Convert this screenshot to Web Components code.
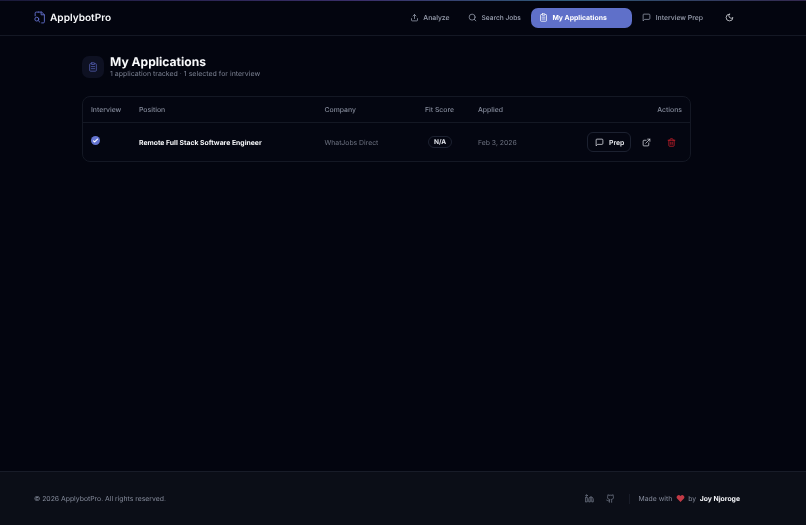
<!DOCTYPE html>
<html>
<head>
<meta charset="utf-8">
<title>ApplybotPro</title>
<style>
  html, body { margin: 0; height: 100%; }
  body {
    background: #03050f;
    color: #fff;
    font-family: Inter, "Liberation Sans", sans-serif;
    text-rendering: geometricPrecision;
    display: flex;
    flex-direction: column;
    height: 525px;
    overflow: hidden;
  }
  /* the reference is soft all over, and a filter also drops the colour fringes on small text */
  app-header, app-main, app-footer { filter: blur(.3px); }
  app-main { flex: 1; }
</style>
</head>
<body>
<app-header></app-header>
<app-main></app-main>
<app-footer></app-footer>

<script>
const icons = {
  upload: '<path d="M12 15V4M8 8l4-4 4 4M4 15v4a2 2 0 0 0 2 2h12a2 2 0 0 0 2-2v-4"/>',
  search: '<circle cx="11" cy="11" r="8"/><path d="m21 21-4.3-4.3"/>',
  clip: '<rect x="8" y="2" width="8" height="4" rx="1"/><path d="M16 4h2a2 2 0 0 1 2 2v14a2 2 0 0 1-2 2H6a2 2 0 0 1-2-2V6a2 2 0 0 1 2-2h2M8 11h8M8 16h8"/>',
  chat: '<path d="M21 15a2 2 0 0 1-2 2H7l-4 4V5a2 2 0 0 1 2-2h14a2 2 0 0 1 2 2z"/>',
  moon: '<path d="M12 3a6 6 0 0 0 9 9 9 9 0 1 1-9-9z"/>',
  link: '<path d="M18 13v6a2 2 0 0 1-2 2H5a2 2 0 0 1-2-2V8a2 2 0 0 1 2-2h6M15 3h6v6M10 14 21 3"/>',
  trash: '<path d="M3 6h18M19 6v14a2 2 0 0 1-2 2H7a2 2 0 0 1-2-2V6M8 6V4a2 2 0 0 1 2-2h4a2 2 0 0 1 2 2v2M10 11v6M14 11v6"/>',
  logo: '<path d="M10 2h6l5 5v13a2 2 0 0 1-2 2h-3M15 2v5h6M4 9V4a2 2 0 0 1 2-2h4"/><circle cx="7" cy="15" r="3.6"/><path d="m10 18 2.6 2.6"/>',
  linkedin: '<path d="M16 8a6 6 0 0 1 6 6v7h-4v-7a2 2 0 0 0-4 0v7h-4v-7a6 6 0 0 1 6-6z"/><rect x="2" y="9" width="4" height="12"/><circle cx="4" cy="4" r="2"/>',
  github: '<path d="M15 22v-4a4.8 4.8 0 0 0-1-3.5c3 0 6-2 6-5.5.08-1.25-.27-2.48-1-3.5.28-1.15.28-2.35 0-3.5 0 0-1 0-3 1.5-2.64-.5-5.36-.5-8 0C6 2 5 2 5 2c-.3 1.15-.3 2.35 0 3.5A5.4 5.4 0 0 0 4 9c0 3.5 3 5.5 6 5.5-.39.49-.68 1.05-.85 1.65-.17.6-.22 1.23-.15 1.85v4"/><path d="M9 18c-4.51 2-5-2-7-2"/>'
};

function svg(name, size, color, width) {
  return `<svg xmlns="http://www.w3.org/2000/svg" width="${size}" height="${size}" viewBox="0 0 24 24" fill="none" stroke="${color}" stroke-width="${width || 2}" stroke-linecap="round" stroke-linejoin="round">${icons[name]}</svg>`;
}

class AppHeader extends HTMLElement {
  constructor() {
    super();
    this.attachShadow({mode: 'open'});
    this.shadowRoot.innerHTML = `<style>
      :host {
        display: block;
        height: 35px;
        border-bottom: 1px solid #141824;
        position: relative;
        background: #03050f;
      }
      :host::before {
        content: "";
        position: absolute;
        top: 0; left: 0; right: 0;
        height: 1px;
        background: linear-gradient(90deg, #1a1a3a, #3a2f6a 45%, #2f5a78 70%, #33284f);
      }
      .bar {
        height: 100%;
        padding: 0 64px 0 33px;
        display: flex;
        align-items: center;
        justify-content: space-between;
      }
      .brand { display: flex; align-items: center; gap: 4px; font-size: 10.1px; font-weight: 600; color: #f8f9fb; }
      .brand svg { display: block; }
      nav { display: flex; align-items: center; }
      .item {
        display: flex;
        align-items: center;
        gap: 4.5px;
        height: 20px;
        padding: 0 10px;
        border-radius: 7px;
        font-size: 6.85px;
        font-weight: 500;
        color: #9ba1b1;
      }
      .item.jobs { font-size: 6.6px; margin-left: -1.5px; }
      .item.on { background: #5f70c9; color: #fff; font-weight: 700; padding: 0 25.5px 0 8px; }
      .item svg { display: block; }
      .moon { margin-left: 4px; padding: 0 8px; }
    </style>
    <div class="bar">
      <div class="brand">${svg('logo', 13, '#5f6bc4', 1.8)}<span>ApplybotPro</span></div>
      <nav>
        <div class="item">${svg('upload', 9, '#9ba1b1')}Analyze</div>
        <div class="item jobs">${svg('search', 9, '#9ba1b1')}Search Jobs</div>
        <div class="item on">${svg('clip', 9, '#fff')}My Applications</div>
        <div class="item">${svg('chat', 9, '#9ba1b1')}Interview Prep</div>
        <div class="item moon">${svg('moon', 9, '#e2e4ea')}</div>
      </nav>
    </div>`;
  }
}

class PageTitle extends HTMLElement {
  constructor() {
    super();
    this.attachShadow({mode: 'open'});
    this.shadowRoot.innerHTML = `<style>
      :host { display: flex; align-items: center; gap: 6px; }
      .badge {
        width: 22px; height: 22px;
        border-radius: 7px;
        background: #0e1122;
        display: flex; align-items: center; justify-content: center;
      }
      h1 { margin: 0; font-size: 12.1px; line-height: 15px; font-weight: 700; color: #f8f9fb; }
      p { margin: 0; font-size: 7px; line-height: 10px; color: #7b8192; }
    </style>
    <div class="badge">${svg('clip', 10, '#4f5aa8')}</div>
    <div><h1><slot name="title"></slot></h1><p><slot name="sub"></slot></p></div>`;
  }
}

class AppTable extends HTMLElement {
  constructor() {
    super();
    this.attachShadow({mode: 'open'});
    this.shadowRoot.innerHTML = `<style>
      :host {
        display: block;
        border: 1px solid #141824;
        border-radius: 8px;
        background: #040611;
        font-size: 6.85px;
      }
      .row {
        display: grid;
        grid-template-columns: 48px 185.5px 100.5px 53px 1fr;
        align-items: center;
        padding: 0 8px;
      }
      .head { height: 25px; border-bottom: 1px solid #141824; color: #858b9b; font-weight: 500; }
      .body { height: 38px; color: #6e7382; }
      .check {
        width: 9px; height: 9px; border-radius: 50%;
        background: #6474d0;
        display: flex; align-items: center; justify-content: center;
        position: relative; top: -2px;
      }
      .pos { font-weight: 700; color: #f5f6f9; }
      .pill {
        display: inline-block;
        margin-left: 3px;
        border: 1px solid #1c2130;
        border-radius: 7px;
        padding: 1px 5px;
        font-size: 6.5px;
        font-weight: 700;
        color: #e0e2e9;
      }
      .split { display: flex; justify-content: space-between; align-items: center; }
      .acts { display: flex; align-items: center; justify-content: flex-end; }
      .prep {
        display: flex; align-items: center; gap: 5px;
        height: 20px;
        width: 44px;
        box-sizing: border-box;
        padding-left: 7px;
        border: 1px solid #1c2130;
        border-radius: 6px;
        color: #eceef3;
        font-weight: 600;
      }
      svg { display: block; }
      .acts .l { margin-left: 11px; }
      .acts .t { margin: 0 6px 0 16px; }
    </style>
    <div class="row head">
      <div>Interview</div><div>Position</div><div>Company</div><div>Fit Score</div>
      <div class="split"><span>Applied</span><span>Actions</span></div>
    </div>
    <div class="row body">
      <div><div class="check"><svg width="7" height="7" viewBox="0 0 24 24" fill="none" stroke="#fff" stroke-width="4" stroke-linecap="round" stroke-linejoin="round"><path d="M5 13l4 4L19 7"/></svg></div></div>
      <div class="pos">Remote Full Stack Software Engineer</div>
      <div>WhatJobs Direct</div>
      <div><span class="pill">N/A</span></div>
      <div class="split">
        <span>Feb 3, 2026</span>
        <div class="acts">
          <div class="prep">${svg('chat', 9, '#e0e2e9')}Prep</div>
          <span class="l">${svg('link', 9, '#d5d8e0')}</span>
          <span class="t">${svg('trash', 9, '#d4202c')}</span>
        </div>
      </div>
    </div>`;
  }
}

class AppMain extends HTMLElement {
  constructor() {
    super();
    this.attachShadow({mode: 'open'});
    this.shadowRoot.innerHTML = `<style>
      :host { display: block; padding: 18px 115px 0 82px; }
      page-title { margin-bottom: 17px; }
    </style>
    <page-title>
      <span slot="title">My Applications</span>
      <span slot="sub">1 application tracked · 1 selected for interview</span>
    </page-title>
    <app-table></app-table>`;
  }
}

class AppFooter extends HTMLElement {
  constructor() {
    super();
    this.attachShadow({mode: 'open'});
    this.shadowRoot.innerHTML = `<style>
      :host {
        display: flex;
        align-items: center;
        justify-content: space-between;
        height: 53px;
        padding: 0 66px 0 34px;
        background: #0b0e17;
        border-top: 1px solid #181c28;
        font-size: 6.85px;
        color: #858b9b;
      }
      .right { display: flex; align-items: center; }
      svg { display: block; }
      .gh { margin-left: 12px; }
      .sep { width: 1px; height: 10px; background: #181c28; margin: 0 9px 0 14px; }
      .heart { margin: 0 3.5px; }
      b { color: #f2f3f7; font-weight: 700; margin-left: 3.5px; }
    </style>
    <div>© 2026 ApplybotPro. All rights reserved.</div>
    <div class="right">
      ${svg('linkedin', 9, '#777d8e')}
      <span class="gh">${svg('github', 9, '#777d8e')}</span>
      <span class="sep"></span>
      <span>Made with</span>
      <svg class="heart" width="9" height="9" viewBox="0 0 24 24" fill="#c23a46"><path d="M12 21 3.5 12.5A5.5 5.5 0 0 1 11.3 4.7L12 5.4l.7-.7a5.5 5.5 0 0 1 7.8 7.8z"/></svg>
      <span>by</span>
      <b>Joy Njoroge</b>
    </div>`;
  }
}

customElements.define('page-title', PageTitle);
customElements.define('app-table', AppTable);
customElements.define('app-header', AppHeader);
customElements.define('app-main', AppMain);
customElements.define('app-footer', AppFooter);
</script>
</body>
</html>
